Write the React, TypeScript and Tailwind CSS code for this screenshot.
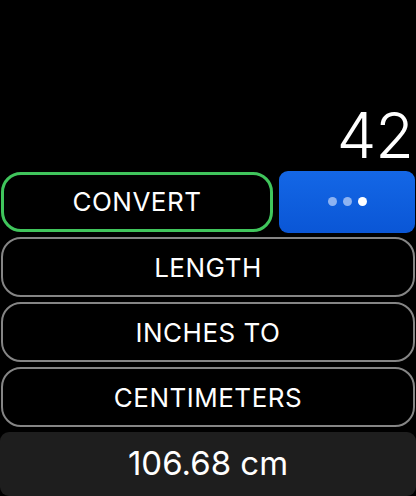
export default function App() {
  const rows = ["LENGTH", "INCHES TO", "CENTIMETERS"];
  return (
    <div
      className="w-[416px] h-[496px] bg-black text-white flex flex-col overflow-hidden"
      style={{ fontFamily: "Inter, 'Noto Sans', sans-serif" }}
    >
      <div className="h-[170px] flex items-end justify-end pr-[3px] pb-[3px]">
        <span className="text-[63px] leading-none font-light tracking-[-1px]">42</span>
      </div>
      <div className="flex items-center gap-[6px] h-[63px] px-[1px]">
        <div className="w-[272px] h-[60px] rounded-[20px] border-[3px] border-[#40c55c] flex items-center justify-center text-[26px] tracking-[0.5px]">
          CONVERT
        </div>
        <div className="flex-1 h-[62px] rounded-[9px] bg-gradient-to-b from-[#1467e6] to-[#0a56d6] flex items-center justify-center gap-[6px]">
          <span className="w-[9px] h-[9px] rounded-full bg-[#8db3f2]" />
          <span className="w-[9px] h-[9px] rounded-full bg-[#8db3f2]" />
          <span className="w-[9px] h-[9px] rounded-full bg-white" />
        </div>
      </div>
      <div className="flex flex-col gap-[5px] px-[1px] mt-[4px]">
        {rows.map((r) => (
          <div
            key={r}
            className="h-[60px] rounded-[20px] border-[2.5px] border-[#858585] flex items-center justify-center text-[26px] tracking-[0.5px]"
          >
            {r}
          </div>
        ))}
      </div>
      <div className="mt-[5px] h-[64px] rounded-[9px] bg-[#1e1e1e] flex items-center justify-center text-[33px]">
        106.68 cm
      </div>
    </div>
  );
}
